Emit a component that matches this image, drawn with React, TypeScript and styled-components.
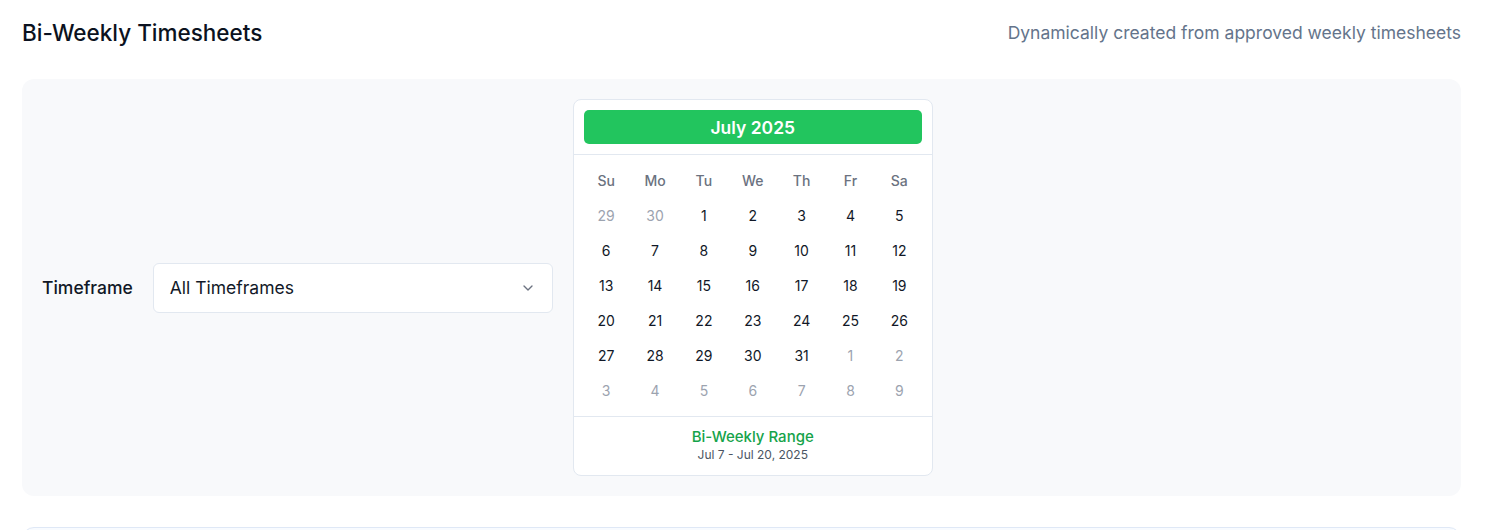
import styled, { createGlobalStyle } from 'styled-components';

const GlobalStyle = createGlobalStyle`
  body {
    margin: 0;
    background: #ffffff;
    font-family: Inter, 'Noto Sans', sans-serif;
    color: #0f172a;
  }
`;

const Page = styled.div`
  padding: 18px 30px 0 22px;
`;

const Header = styled.div`
  display: flex;
  justify-content: space-between;
  align-items: center;
  height: 28px;
  margin-bottom: 33px;
`;

const Title = styled.h1`
  margin: 0;
  font-size: 22.5px;
  font-weight: 500;
  color: #0b1220;
`;

const Subtitle = styled.span`
  font-size: 17.5px;
  color: #64748b;
`;

const FilterPanel = styled.div`
  display: flex;
  align-items: center;
  gap: 20px;
  padding: 20px;
  background: #f8f9fb;
  border-radius: 12px;
`;

const Label = styled.span`
  font-size: 17.5px;
  font-weight: 500;
  color: #111827;
`;

const Select = styled.div`
  box-sizing: border-box;
  width: 400px;
  height: 50px;
  display: flex;
  align-items: center;
  justify-content: space-between;
  padding: 0 16px;
  background: #ffffff;
  border: 1px solid #e2e8f0;
  border-radius: 6px;
  font-size: 17.5px;
  color: #111827;
`;

const Calendar = styled.div`
  box-sizing: border-box;
  width: 360px;
  background: #ffffff;
  border: 1px solid #e2e8f0;
  border-radius: 8px;
`;

const CalHead = styled.div`
  padding: 10px;
  border-bottom: 1px solid #e2e8f0;
`;

const MonthBar = styled.div`
  height: 34px;
  display: flex;
  align-items: center;
  justify-content: center;
  background: #22c55e;
  border-radius: 5px;
  color: #ffffff;
  font-size: 17.5px;
  font-weight: 600;
`;

const Grid = styled.div`
  display: grid;
  grid-template-columns: repeat(7, 1fr);
  grid-auto-rows: 35px;
  padding: 8px;
  border-bottom: 1px solid #e2e8f0;
`;

const Cell = styled.div<{ $muted?: boolean; $head?: boolean }>`
  display: flex;
  align-items: center;
  justify-content: center;
  font-size: 14px;
  font-weight: ${(p) => (p.$head ? 500 : 400)};
  color: ${(p) => (p.$head ? '#6b7280' : p.$muted ? '#9ca3af' : '#111827')};
`;

const Footer = styled.div`
  display: flex;
  flex-direction: column;
  align-items: center;
  padding: 10px 0 12px;
`;

const RangeTitle = styled.span`
  font-size: 15px;
  font-weight: 500;
  line-height: 20px;
  color: #16a34a;
`;

const RangeText = styled.span`
  font-size: 12px;
  line-height: 16px;
  color: #4b5563;
`;

const NextCard = styled.div`
  margin-top: 31px;
  height: 40px;
  border: 1px solid #dfe8f6;
  border-radius: 12px;
  background: #f8fbff;
`;

const weekdays = ['Su', 'Mo', 'Tu', 'We', 'Th', 'Fr', 'Sa'];

const days: Array<{ n: number; muted: boolean }> = [
  { n: 29, muted: true },
  { n: 30, muted: true },
  ...Array.from({ length: 31 }, (_, i) => ({ n: i + 1, muted: false })),
  ...Array.from({ length: 9 }, (_, i) => ({ n: i + 1, muted: true })),
];

export default function App() {
  return (
    <>
      <GlobalStyle />
      <Page>
        <Header>
          <Title>Bi-Weekly Timesheets</Title>
          <Subtitle>Dynamically created from approved weekly timesheets</Subtitle>
        </Header>
        <FilterPanel>
          <Label>Timeframe</Label>
          <Select>
            All Timeframes
            <svg width="16" height="16" viewBox="0 0 24 24" fill="none" stroke="#6b7280" strokeWidth="2" strokeLinecap="round" strokeLinejoin="round">
              <path d="m6 9 6 6 6-6" />
            </svg>
          </Select>
          <Calendar>
            <CalHead>
              <MonthBar>July 2025</MonthBar>
            </CalHead>
            <Grid>
              {weekdays.map((d) => (
                <Cell key={d} $head>
                  {d}
                </Cell>
              ))}
              {days.map((d, i) => (
                <Cell key={i} $muted={d.muted}>
                  {d.n}
                </Cell>
              ))}
            </Grid>
            <Footer>
              <RangeTitle>Bi-Weekly Range</RangeTitle>
              <RangeText>Jul 7 - Jul 20, 2025</RangeText>
            </Footer>
          </Calendar>
        </FilterPanel>
        <NextCard />
      </Page>
    </>
  );
}
